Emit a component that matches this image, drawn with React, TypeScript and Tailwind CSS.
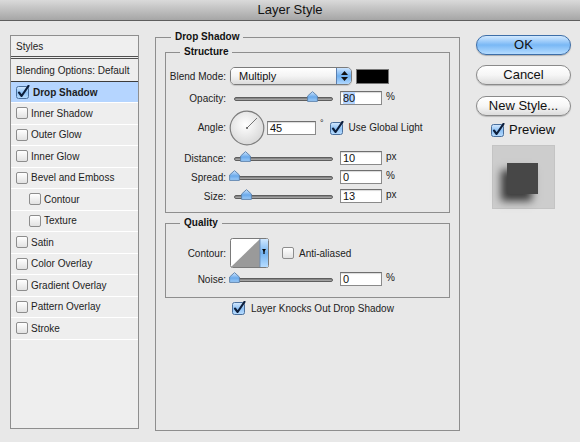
import React from "react";

const styleItems: { label: string; indent?: boolean }[] = [
  { label: "Inner Shadow" },
  { label: "Outer Glow" },
  { label: "Inner Glow" },
  { label: "Bevel and Emboss" },
  { label: "Contour", indent: true },
  { label: "Texture", indent: true },
  { label: "Satin" },
  { label: "Color Overlay" },
  { label: "Gradient Overlay" },
  { label: "Pattern Overlay" },
  { label: "Stroke" },
];

function Box({ checked = false }: { checked?: boolean }) {
  if (checked) {
    return (
      <svg width="14" height="14" viewBox="0 0 14 14" className="shrink-0">
        <defs>
          <linearGradient id="cbBlue" x1="0" y1="0" x2="0" y2="1">
            <stop offset="0" stopColor="#d6eaff" />
            <stop offset="0.5" stopColor="#8fc2f5" />
            <stop offset="1" stopColor="#b8dcff" />
          </linearGradient>
        </defs>
        <rect x="0.5" y="1.5" width="12" height="12" rx="2" fill="url(#cbBlue)" stroke="#4a6f9c" />
        <path d="M3 7.5 L5.6 11 L12.5 0.8" fill="none" stroke="#0d1f3c" strokeWidth="2.1" strokeLinecap="round" strokeLinejoin="round" />
      </svg>
    );
  }
  return (
    <span className="block w-[12px] h-[12px] shrink-0 rounded-[2px] border border-[#8d8d8d] bg-gradient-to-b from-[#ffffff] to-[#e2e2e2]" />
  );
}

function Thumb() {
  return (
    <svg width="11" height="11" viewBox="0 0 11 11">
      <defs>
        <linearGradient id="thumbG" x1="0" y1="0" x2="0" y2="1">
          <stop offset="0" stopColor="#cfe6ff" />
          <stop offset="0.55" stopColor="#6aa9ea" />
          <stop offset="1" stopColor="#9fcdfa" />
        </linearGradient>
      </defs>
      <path d="M5.5 0.6 L10.4 5 V10.4 H0.6 V5 Z" fill="url(#thumbG)" stroke="#5a7fa8" strokeWidth="0.9" strokeLinejoin="round" />
    </svg>
  );
}

function Slider({ pos }: { pos: number }) {
  return (
    <div className="relative w-[106px] h-[14px] shrink-0">
      <div className="absolute left-[4px] right-[3px] top-[6px] h-[4px] rounded-full border border-[#5e5e5e] bg-gradient-to-b from-[#7a7a7a] to-[#b0b0b0]" />
      <div className="absolute top-[0px]" style={{ left: pos - 5 }}>
        <Thumb />
      </div>
    </div>
  );
}

function NumField({ value, w = 42, selected = false }: { value: string; w?: number; selected?: boolean }) {
  return (
    <div
      className="h-[14px] shrink-0 border border-[#8a8a8a] border-t-[#6f6f6f] bg-white text-[11px] leading-[12px] pl-[2px] text-[#111] shadow-[inset_0_1px_1px_rgba(0,0,0,0.15)]"
      style={{ width: w }}
    >
      {selected ? <span className="bg-[#b5d5ff]">{value}</span> : value}
    </div>
  );
}

function Label({ children }: { children: React.ReactNode }) {
  return <div className="w-[61px] shrink-0 text-right text-[10px] text-[#222] pr-[1px]">{children}</div>;
}

function SliderRow({ label, pos, value, unit, selected }: { label: string; pos: number; value: string; unit: string; selected?: boolean }) {
  return (
    <div className="flex items-center h-[14px]">
      <Label>{label}</Label>
      <div className="ml-[3px]">
        <Slider pos={pos} />
      </div>
      <div className="ml-[4px]">
        <NumField value={value} selected={selected} />
      </div>
      <span className="ml-[4px] text-[10px] text-[#222] -mt-[3px]">{unit}</span>
    </div>
  );
}

function AngleDial() {
  return (
    <svg width="36" height="36" viewBox="0 0 36 36" className="shrink-0">
      <defs>
        <radialGradient id="dialG" cx="0.45" cy="0.4" r="0.6">
          <stop offset="0" stopColor="#ffffff" />
          <stop offset="1" stopColor="#d9d9d9" />
        </radialGradient>
      </defs>
      <circle cx="18" cy="18" r="16.8" fill="url(#dialG)" stroke="#7d7d7d" strokeWidth="1.2" />
      <line x1="18" y1="18" x2="28" y2="8" stroke="#666" strokeWidth="0.9" />
      <circle cx="18" cy="18" r="1" fill="#555" />
    </svg>
  );
}

function ContourSwatch() {
  return (
    <svg width="39" height="30" viewBox="0 0 39 30" className="shrink-0">
      <defs>
        <linearGradient id="aquaV" x1="0" y1="0" x2="0" y2="1">
          <stop offset="0" stopColor="#d0e8ff" />
          <stop offset="0.5" stopColor="#74b3f0" />
          <stop offset="1" stopColor="#b6dcff" />
        </linearGradient>
      </defs>
      <rect x="0.5" y="0.5" width="38" height="29" rx="2" fill="#fff" stroke="#7a7a7a" />
      <path d="M1 29 L30 1 V29 Z" fill="#9a9a9a" />
      <rect x="30" y="1" width="8" height="28" fill="url(#aquaV)" />
      <line x1="30" y1="1" x2="30" y2="29" stroke="#5f86b5" strokeWidth="0.8" />
      <path d="M32 11 H36 L34 14 Z" fill="#000" />
      <rect x="33.4" y="13" width="1.2" height="3" fill="#000" />
    </svg>
  );
}

function BlendSelect() {
  return (
    <div className="flex h-[18px] w-[122px] shrink-0 rounded-[5px] border border-[#7b7b7b] overflow-hidden shadow-[0_1px_1px_rgba(0,0,0,0.15)]">
      <div className="flex-1 flex items-center pl-[8px] text-[11px] text-[#111] bg-gradient-to-b from-[#ffffff] via-[#f4f4f4] to-[#dcdcdc]">
        Multiply
      </div>
      <div className="w-[15px] flex flex-col items-center justify-center gap-[2px] border-l border-[#5a7fb0] bg-gradient-to-b from-[#cce5ff] via-[#6fb0f0] to-[#b0d8ff]">
        <svg width="7" height="4" viewBox="0 0 7 4">
          <path d="M3.5 0 L7 4 H0 Z" fill="#111" />
        </svg>
        <svg width="7" height="4" viewBox="0 0 7 4">
          <path d="M0 0 H7 L3.5 4 Z" fill="#111" />
        </svg>
      </div>
    </div>
  );
}

function Legend({ children, ml }: { children: React.ReactNode; ml: string }) {
  return <legend className={`${ml} px-[4px] text-[10px] leading-[12px] font-bold text-[#111]`}>{children}</legend>;
}

function AquaButton({ children, primary = false }: { children: React.ReactNode; primary?: boolean }) {
  return (
    <button
      className={
        primary
          ? "w-[95px] h-[20px] rounded-full border border-[#3d6ea8] bg-gradient-to-b from-[#d2e9ff] via-[#79b8f5] to-[#b5dcff] text-[13px] leading-[18px] text-[#111] shadow-[0_1px_1px_rgba(0,0,0,0.25)]"
          : "w-[95px] h-[20px] rounded-full border border-[#8a8a8a] bg-gradient-to-b from-[#ffffff] via-[#f6f6f6] to-[#dddddd] text-[13px] leading-[18px] text-[#111] shadow-[0_1px_1px_rgba(0,0,0,0.2)]"
      }
    >
      {children}
    </button>
  );
}

export default function App() {
  return (
    <div className="w-[580px] h-[442px] overflow-hidden bg-[#e8e8e8] font-['Liberation_Sans',Arial,sans-serif] text-[#1a1a1a]">
      {/* title bar */}
      <div className="h-[21px] border-b border-[#5e5e5e] bg-gradient-to-b from-[#dadada] to-[#a6a6a6] text-center text-[13px] leading-[20px] text-[#111]">
        Layer Style
      </div>

      <div className="flex items-start pt-[10px] pl-[10px]">
        {/* styles list */}
        <div className="mt-[4px] w-[129px] h-[394px] border border-[#8e8e8e] bg-[#eeeeee] text-[10px] text-[#1d1d1d]">
          <div className="h-[23px] pl-[5px] flex items-center border-b-[3px] border-double border-[#505050] bg-[#efefef]">
            Styles
          </div>
          <div className="h-[23px] pl-[5px] flex items-center border-b border-[#3c3c3c]">
            Blending Options: Default
          </div>
          <div className="h-[21px] pl-[5px] flex items-center gap-[3px] bg-[#b5d5ff] border-b border-white font-bold">
            <Box checked />
            <span>Drop Shadow</span>
          </div>
          {styleItems.map((it) => (
            <div
              key={it.label}
              className={`h-[21.5px] flex items-center gap-[3px] border-b border-white ${it.indent ? "pl-[18px]" : "pl-[5px]"}`}
            >
              <Box />
              <span>{it.label}</span>
            </div>
          ))}
        </div>

        {/* main options */}
        <fieldset className="ml-[16px] w-[305px] h-[400px] border border-[#8e8e8e] px-[9px]">
          <Legend ml="ml-[6px]">Drop Shadow</Legend>

          <fieldset className="mt-[3px] border border-[#8e8e8e] pb-[9px]">
            <Legend ml="ml-[14px]">Structure</Legend>

            <div className="mt-[9px] flex items-center h-[18px]">
              <Label>Blend Mode:</Label>
              <div className="ml-[3px]">
                <BlendSelect />
              </div>
              <div className="ml-[4px] w-[33px] h-[15px] bg-black border border-[#777]" />
            </div>

            <div className="mt-[6px]">
              <SliderRow label="Opacity:" pos={82} value="80" unit="%" selected />
            </div>

            <div className="mt-[5px] flex items-center h-[35px]">
              <Label>Angle:</Label>
              <div className="ml-[2px]">
                <AngleDial />
              </div>
              <div className="ml-[2px]">
                <NumField value="45" w={49} />
              </div>
              <span className="ml-[4px] -mt-[8px] text-[9px] text-[#222]">°</span>
              <div className="ml-[6px]">
                <Box checked />
              </div>
              <span className="ml-[5px] text-[10px] text-[#222]">Use Global Light</span>
            </div>

            <div className="mt-[6px]">
              <SliderRow label="Distance:" pos={15} value="10" unit="px" />
            </div>
            <div className="mt-[5px]">
              <SliderRow label="Spread:" pos={4} value="0" unit="%" />
            </div>
            <div className="mt-[5px]">
              <SliderRow label="Size:" pos={16} value="13" unit="px" />
            </div>
          </fieldset>

          <fieldset className="mt-[4px] border border-[#8e8e8e] pb-[11px]">
            <Legend ml="ml-[14px]">Quality</Legend>

            <div className="mt-[9px] flex items-center h-[30px]">
              <Label>Contour:</Label>
              <div className="ml-[3px]">
                <ContourSwatch />
              </div>
              <div className="ml-[13px]">
                <Box />
              </div>
              <span className="ml-[5px] text-[10px] text-[#222]">Anti-aliased</span>
            </div>

            <div className="mt-[4px]">
              <SliderRow label="Noise:" pos={4} value="0" unit="%" />
            </div>
          </fieldset>

          <div className="mt-[3px] pl-[67px] flex items-center gap-[5px] h-[14px] text-[10px] text-[#222]">
            <Box checked />
            <span>Layer Knocks Out Drop Shadow</span>
          </div>
        </fieldset>

        {/* buttons & preview */}
        <div className="mt-[4px] ml-[16px] w-[95px] flex flex-col">
          <AquaButton primary>OK</AquaButton>
          <div className="mt-[7px]">
            <AquaButton>Cancel</AquaButton>
          </div>
          <div className="mt-[7px]">
            <AquaButton>New Style...</AquaButton>
          </div>
          <div className="mt-[6px] pl-[15px] flex items-center gap-[4px] text-[13px] leading-[14px] text-[#111]">
            <Box checked />
            <span>Preview</span>
          </div>
          <div className="mt-[8px] ml-[16px] w-[63px] h-[64px] border border-[#c4c4c4] bg-[#cdcdcd] pl-[14px] pt-[17px]">
            <div className="w-[31px] h-[31px] bg-[#474747] shadow-[-6px_7px_8px_rgba(0,0,0,0.7)]" />
          </div>
        </div>
      </div>
    </div>
  );
}
